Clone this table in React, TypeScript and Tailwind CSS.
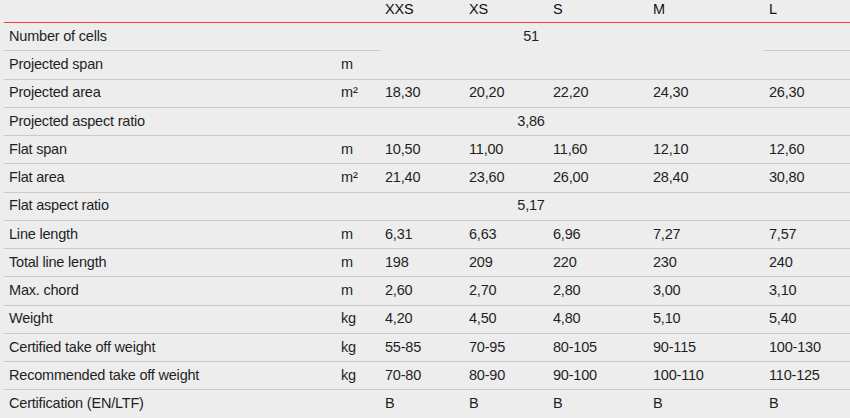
import React from "react";

type Row = {
  label: string;
  unit?: string;
  values?: string[];
  span?: string;
  gap?: boolean;
};

const rows: Row[] = [
  { label: "Number of cells", span: "51", gap: true },
  { label: "Projected span", unit: "m", values: ["", "", "", "", ""] },
  { label: "Projected area", unit: "m²", values: ["18,30", "20,20", "22,20", "24,30", "26,30"] },
  { label: "Projected aspect ratio", span: "3,86" },
  { label: "Flat span", unit: "m", values: ["10,50", "11,00", "11,60", "12,10", "12,60"] },
  { label: "Flat area", unit: "m²", values: ["21,40", "23,60", "26,00", "28,40", "30,80"] },
  { label: "Flat aspect ratio", span: "5,17" },
  { label: "Line length", unit: "m", values: ["6,31", "6,63", "6,96", "7,27", "7,57"] },
  { label: "Total line length", unit: "m", values: ["198", "209", "220", "230", "240"] },
  { label: "Max. chord", unit: "m", values: ["2,60", "2,70", "2,80", "3,00", "3,10"] },
  { label: "Weight", unit: "kg", values: ["4,20", "4,50", "4,80", "5,10", "5,40"] },
  { label: "Certified take off weight", unit: "kg", values: ["55-85", "70-95", "80-105", "90-115", "100-130"] },
  { label: "Recommended take off weight", unit: "kg", values: ["70-80", "80-90", "90-100", "100-110", "110-125"] },
  { label: "Certification (EN/LTF)", values: ["B", "B", "B", "B", "B"] },
];

const sizeW = ["w-[84px]", "w-[84px]", "w-[100px]", "w-[116px]", "flex-1"];
const sizes = ["XXS", "XS", "S", "M", "L"];

export default function App() {
  return (
    <div
      className="w-[850px] h-[418px] overflow-hidden bg-[#ededed] pl-[4px] text-[14.5px] tracking-[-0.2px] text-[#1f1f1f]"
      style={{ fontFamily: '"Liberation Sans", Arial, sans-serif' }}
    >
      <div className="flex h-[23px] items-center border-b border-[#ee3e42] text-[#111] pb-[3px]">
        <div className="w-[332px]" />
        <div className="w-[44px]" />
        {sizes.map((s, i) => (
          <div key={s} className={`${sizeW[i]} pl-[5px]`}>
            {s}
          </div>
        ))}
      </div>
      {rows.map((r) => (
        <div key={r.label} className="flex h-[28.25px]">
          <div className="w-[332px] pl-[5px] flex items-center border-b border-[#c9c9c9]">{r.label}</div>
          <div className="w-[44px] pl-[5px] flex items-center border-b border-[#c9c9c9]">{r.unit ?? ""}</div>
          {r.span !== undefined ? (
            <>
              <div className={`w-[384px] flex items-center border-b ${r.gap ? "border-transparent" : "border-[#c9c9c9]"}`}>
                <div className="w-[302px] text-center">{r.span}</div>
              </div>
              <div className="flex-1 border-b border-[#c9c9c9]" />
            </>
          ) : (
            (r.values ?? []).map((v, i) => (
              <div key={i} className={`${sizeW[i]} pl-[5px] flex items-center border-b border-[#c9c9c9]`}>
                {v}
              </div>
            ))
          )}
        </div>
      ))}
    </div>
  );
}
